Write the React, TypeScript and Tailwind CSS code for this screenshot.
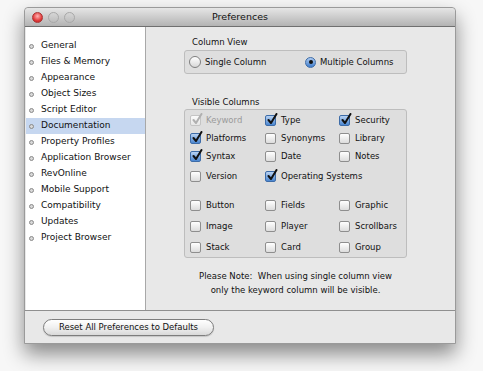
import React from 'react';

const sections = [
    'General',
    'Files & Memory',
    'Appearance',
    'Object Sizes',
    'Script Editor',
    'Documentation',
    'Property Profiles',
    'Application Browser',
    'RevOnline',
    'Mobile Support',
    'Compatibility',
    'Updates',
    'Project Browser',
];

type Box = { label: string; checked?: boolean; disabled?: boolean };

const topRows: Box[][] = [
    [{ label: 'Keyword', checked: true, disabled: true }, { label: 'Type', checked: true }, { label: 'Security', checked: true }],
    [{ label: 'Platforms', checked: true }, { label: 'Synonyms' }, { label: 'Library' }],
    [{ label: 'Syntax', checked: true }, { label: 'Date' }, { label: 'Notes' }],
];

const objectRows: Box[][] = [
    [{ label: 'Button' }, { label: 'Fields' }, { label: 'Graphic' }],
    [{ label: 'Image' }, { label: 'Player' }, { label: 'Scrollbars' }],
    [{ label: 'Stack' }, { label: 'Card' }, { label: 'Group' }],
];

const CheckBox: React.FC<Box> = ({ label, checked, disabled }) => (
    <div className="flex items-center">
        <div
            className={
                checked && !disabled
                    ? 'relative w-[11px] h-[11px] rounded-[2px] border border-[#3d6ca8] bg-gradient-to-b from-[#b9d3f2] to-[#4a86d0]'
                    : disabled
                    ? 'relative w-[11px] h-[11px] rounded-[2px] border border-[#c4c4c4] bg-gradient-to-b from-[#fbfbfb] to-[#e6e6e6]'
                    : 'relative w-[11px] h-[11px] rounded-[2px] border border-[#8e8e8e] bg-gradient-to-b from-[#ffffff] to-[#dcdcdc]'
            }
        >
            {checked && (
                <svg className="absolute left-[1px] top-[-3px]" width="11" height="12" viewBox="0 0 11 12">
                    <path
                        d="M1.5 7 L4 10 L9.5 1"
                        fill="none"
                        stroke={disabled ? '#b0b0b0' : '#111'}
                        strokeWidth="2"
                        strokeLinecap="round"
                        strokeLinejoin="round"
                    />
                </svg>
            )}
        </div>
        <span className={disabled ? 'ml-[5px] text-[#9a9a9a]' : 'ml-[5px]'}>{label}</span>
    </div>
);

const Radio: React.FC<{ label: string; on?: boolean }> = ({ label, on }) => (
    <div className="flex items-center">
        <div
            className={
                on
                    ? 'flex items-center justify-center w-[11px] h-[11px] rounded-full border border-[#3d6ca8] bg-gradient-to-b from-[#aecbf0] to-[#3f7dcc]'
                    : 'w-[12px] h-[12px] rounded-full border border-[#7f7f7f] bg-gradient-to-b from-[#ffffff] to-[#d8d8d8]'
            }
        >
            {on && <div className="w-[4px] h-[4px] rounded-full bg-[#111]" />}
        </div>
        <span className="ml-[4px]">{label}</span>
    </div>
);

const App: React.FC = () => {
    return (
        <div
            className="w-[483px] h-[371px] bg-[#f7f7f7] pt-[7px] pl-[24px] text-[#111]"
            style={{ fontFamily: '"DejaVu Sans", sans-serif' }}
        >
            <div className="w-[432px] h-[337px] flex flex-col border border-[#9a9a9a] rounded-t-[4px] bg-[#e8e8e8] shadow-[0_10px_20px_rgba(0,0,0,0.45)]">
                {/* title bar */}
                <div className="relative h-[19px] flex items-center justify-center rounded-t-[4px] border-b border-[#6f6f6f] bg-gradient-to-b from-[#e6e6e6] to-[#b3b3b3]">
                    <div className="absolute left-[7px] top-[4px] flex gap-[5px]">
                        <div className="w-[11px] h-[11px] rounded-full border border-[#a33] bg-[radial-gradient(circle_at_50%_35%,#ffb3b3,#e23b3b_60%,#b71c1c)]" />
                        <div className="w-[11px] h-[11px] rounded-full border border-[#a8a8a8] bg-gradient-to-b from-[#d6d6d6] to-[#bdbdbd]" />
                        <div className="w-[11px] h-[11px] rounded-full border border-[#a8a8a8] bg-gradient-to-b from-[#d6d6d6] to-[#bdbdbd]" />
                    </div>
                    <span className="text-[9.5px]">Preferences</span>
                </div>

                {/* body */}
                <div className="flex h-[284px] border-b border-[#8f8f8f] pl-[1px]">
                    <div className="w-[120px] bg-white border-r border-[#a8a8a8] pt-[11px] text-[9px]">
                        {sections.map((s) => (
                            <div
                                key={s}
                                className={
                                    s === 'Documentation'
                                        ? 'h-[16px] flex items-center pl-[3px] bg-[#c6d7f0]'
                                        : 'h-[16px] flex items-center pl-[3px]'
                                }
                            >
                                <div className="w-[5px] h-[5px] rounded-full border border-[#8a8a8a] bg-[#d8d8d8]" />
                                <span className="ml-[7px]">{s}</span>
                            </div>
                        ))}
                    </div>

                    <div className="flex-1 pl-[38px] pt-[9px] text-[8.5px]">
                        <div className="pl-[8px] h-[12px] leading-[12px]">Column View</div>
                        <div className="mt-[2px] w-[223px] h-[24px] flex items-center pl-[4px] rounded-[3px] border border-[#bdbdbd] bg-[#dedede]">
                            <div className="w-[116px]">
                                <Radio label="Single Column" />
                            </div>
                            <Radio label="Multiple Columns" on />
                        </div>

                        <div className="mt-[22px] pl-[8px] h-[12px] leading-[12px]">Visible Columns</div>
                        <div className="mt-[1px] w-[223px] h-[149px] pl-[5px] pt-[1px] rounded-[3px] border border-[#bdbdbd] bg-[#dedede]">
                            {topRows.map((row, i) => (
                                <div key={i} className="grid grid-cols-[75px_74px_70px] h-[18px] items-center">
                                    {row.map((b) => (
                                        <CheckBox key={b.label} {...b} />
                                    ))}
                                </div>
                            ))}
                            <div className="h-[22px] flex items-center">
                                <div className="w-[75px]">
                                    <CheckBox label="Version" />
                                </div>
                                <CheckBox label="Operating Systems" checked />
                            </div>
                            <div className="mt-[8px]">
                                {objectRows.map((row, i) => (
                                    <div key={i} className="grid grid-cols-[75px_74px_70px] h-[21px] items-center">
                                        {row.map((b) => (
                                            <CheckBox key={b.label} {...b} />
                                        ))}
                                    </div>
                                ))}
                            </div>
                        </div>

                        <div className="w-[223px] mt-[11px] text-center leading-[14px]">
                            <div>Please Note:&nbsp; When using single column view</div>
                            <div>only the keyword column will be visible.</div>
                        </div>
                    </div>
                </div>

                {/* footer */}
                <div className="flex-1 flex items-center pl-[18px] pt-[1px]">
                    <button className="w-[171px] h-[17px] rounded-full border border-[#7d7d7d] bg-gradient-to-b from-[#ffffff] via-[#f0f0f0] to-[#d9d9d9] text-[8.5px] shadow-[0_1px_1px_rgba(0,0,0,0.15)]">
                        Reset All Preferences to Defaults
                    </button>
                </div>
            </div>
        </div>
    );
};

export default App;
